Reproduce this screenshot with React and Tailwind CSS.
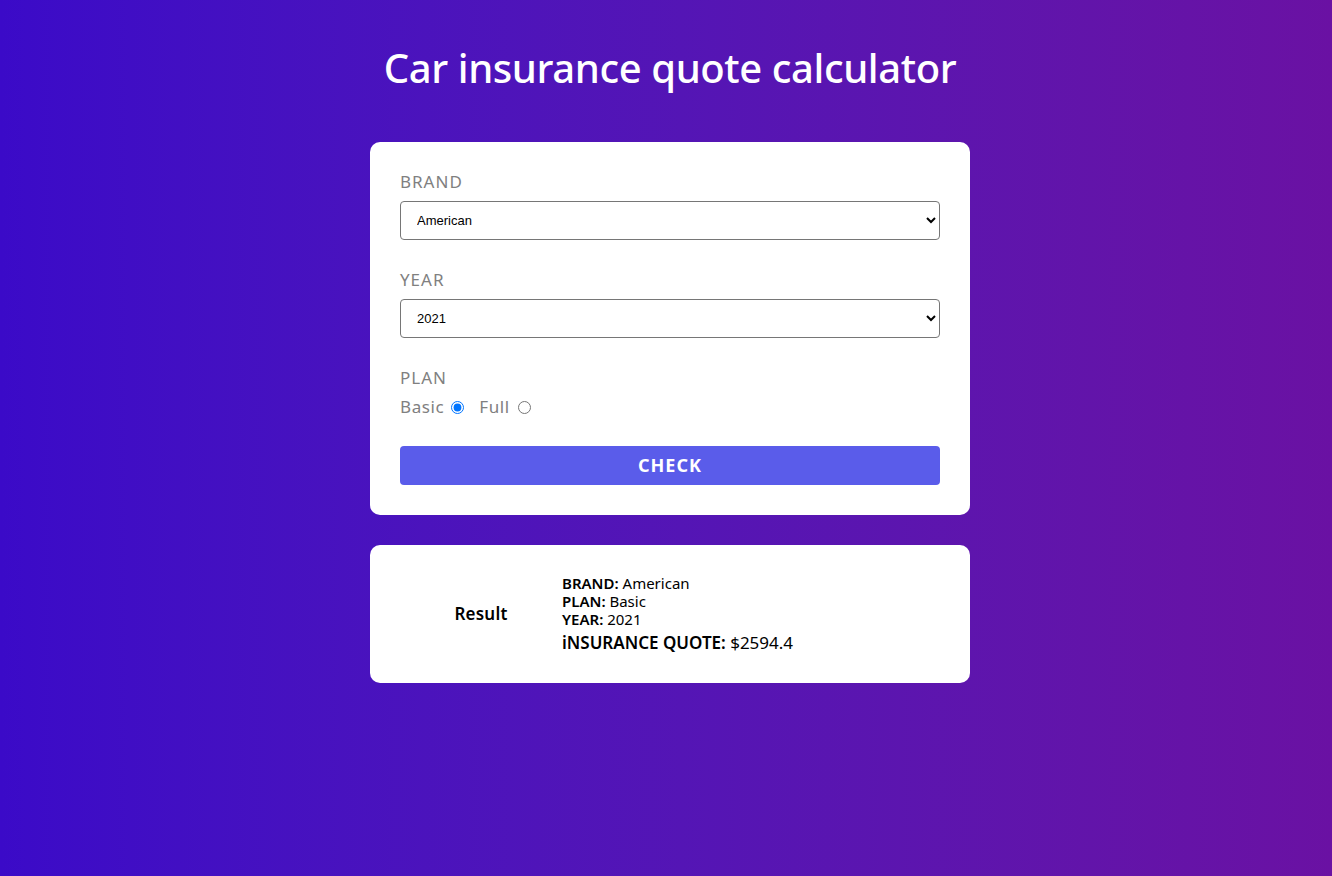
import React, { useState } from "react";

export default function App() {
  const [plan, setPlan] = useState("basic");
  return (
    <div
      className="min-h-[876px] w-full bg-gradient-to-r from-[#3b0ac8] to-[#6a11a3] flex flex-col items-center pl-[8px]"
      style={{ fontFamily: '"Noto Sans", "Open Sans", sans-serif' }}
    >
      <h1 className="mt-[40px] text-[40px] leading-[56px] font-medium text-white tracking-[-0.4px]">
        Car insurance quote calculator
      </h1>
      <div className="mt-[46px] w-[600px] bg-white rounded-[10px] px-[30px] pt-[29px] pb-[30px] flex flex-col">
        <label className="text-[17px] leading-[22px] text-[#808080] tracking-[1px]">BRAND</label>
        <select
          className="mt-[8px] h-[39px] w-full border border-[#767676] rounded-[4px] px-[12px] text-[13px] text-black bg-white"
          style={{ fontFamily: '"Liberation Sans", Arial, sans-serif' }}
          defaultValue="American"
        >
          <option>American</option>
          <option>European</option>
          <option>Asian</option>
        </select>
        <label className="mt-[29px] text-[17px] leading-[22px] text-[#808080] tracking-[1px]">YEAR</label>
        <select
          className="mt-[8px] h-[39px] w-full border border-[#767676] rounded-[4px] px-[12px] text-[13px] text-black bg-white"
          style={{ fontFamily: '"Liberation Sans", Arial, sans-serif' }}
          defaultValue="2021"
        >
          <option>2021</option>
          <option>2020</option>
          <option>2019</option>
        </select>
        <label className="mt-[29px] text-[17px] leading-[22px] text-[#808080] tracking-[1px]">PLAN</label>
        <div className="mt-[7px] flex items-center text-[17px] leading-[22px] text-[#808080] tracking-[0.6px]">
          <span>Basic</span>
          <input
            type="radio"
            name="plan"
            checked={plan === "basic"}
            onChange={() => setPlan("basic")}
            className="ml-[7px] w-[13px] h-[13px] m-0"
          />
          <span className="ml-[15px]">Full</span>
          <input
            type="radio"
            name="plan"
            checked={plan === "full"}
            onChange={() => setPlan("full")}
            className="ml-[8px] w-[13px] h-[13px] m-0"
          />
        </div>
        <button className="mt-[28px] h-[39px] w-full rounded-[4px] bg-[#5a5cea] text-white font-bold text-[18px] tracking-[1px]">
          CHECK
        </button>
      </div>
      <div className="mt-[30px] w-[600px] h-[138px] bg-white rounded-[10px] flex items-center">
        <div className="w-[192px] pl-[30px] text-center text-[17px] font-semibold text-black tracking-[0.2px]">Result</div>
        <div className="flex flex-col text-black">
          <p className="text-[15px] leading-[18px]"><span className="font-semibold">BRAND:</span> American</p>
          <p className="text-[15px] leading-[18px]"><span className="font-semibold">PLAN:</span> Basic</p>
          <p className="text-[15px] leading-[18px]"><span className="font-semibold">YEAR:</span> 2021</p>
          <p className="mt-[4px] text-[17px] leading-[22px]"><span className="font-semibold">iNSURANCE QUOTE:</span> $2594.4</p>
        </div>
      </div>
    </div>
  );
}
